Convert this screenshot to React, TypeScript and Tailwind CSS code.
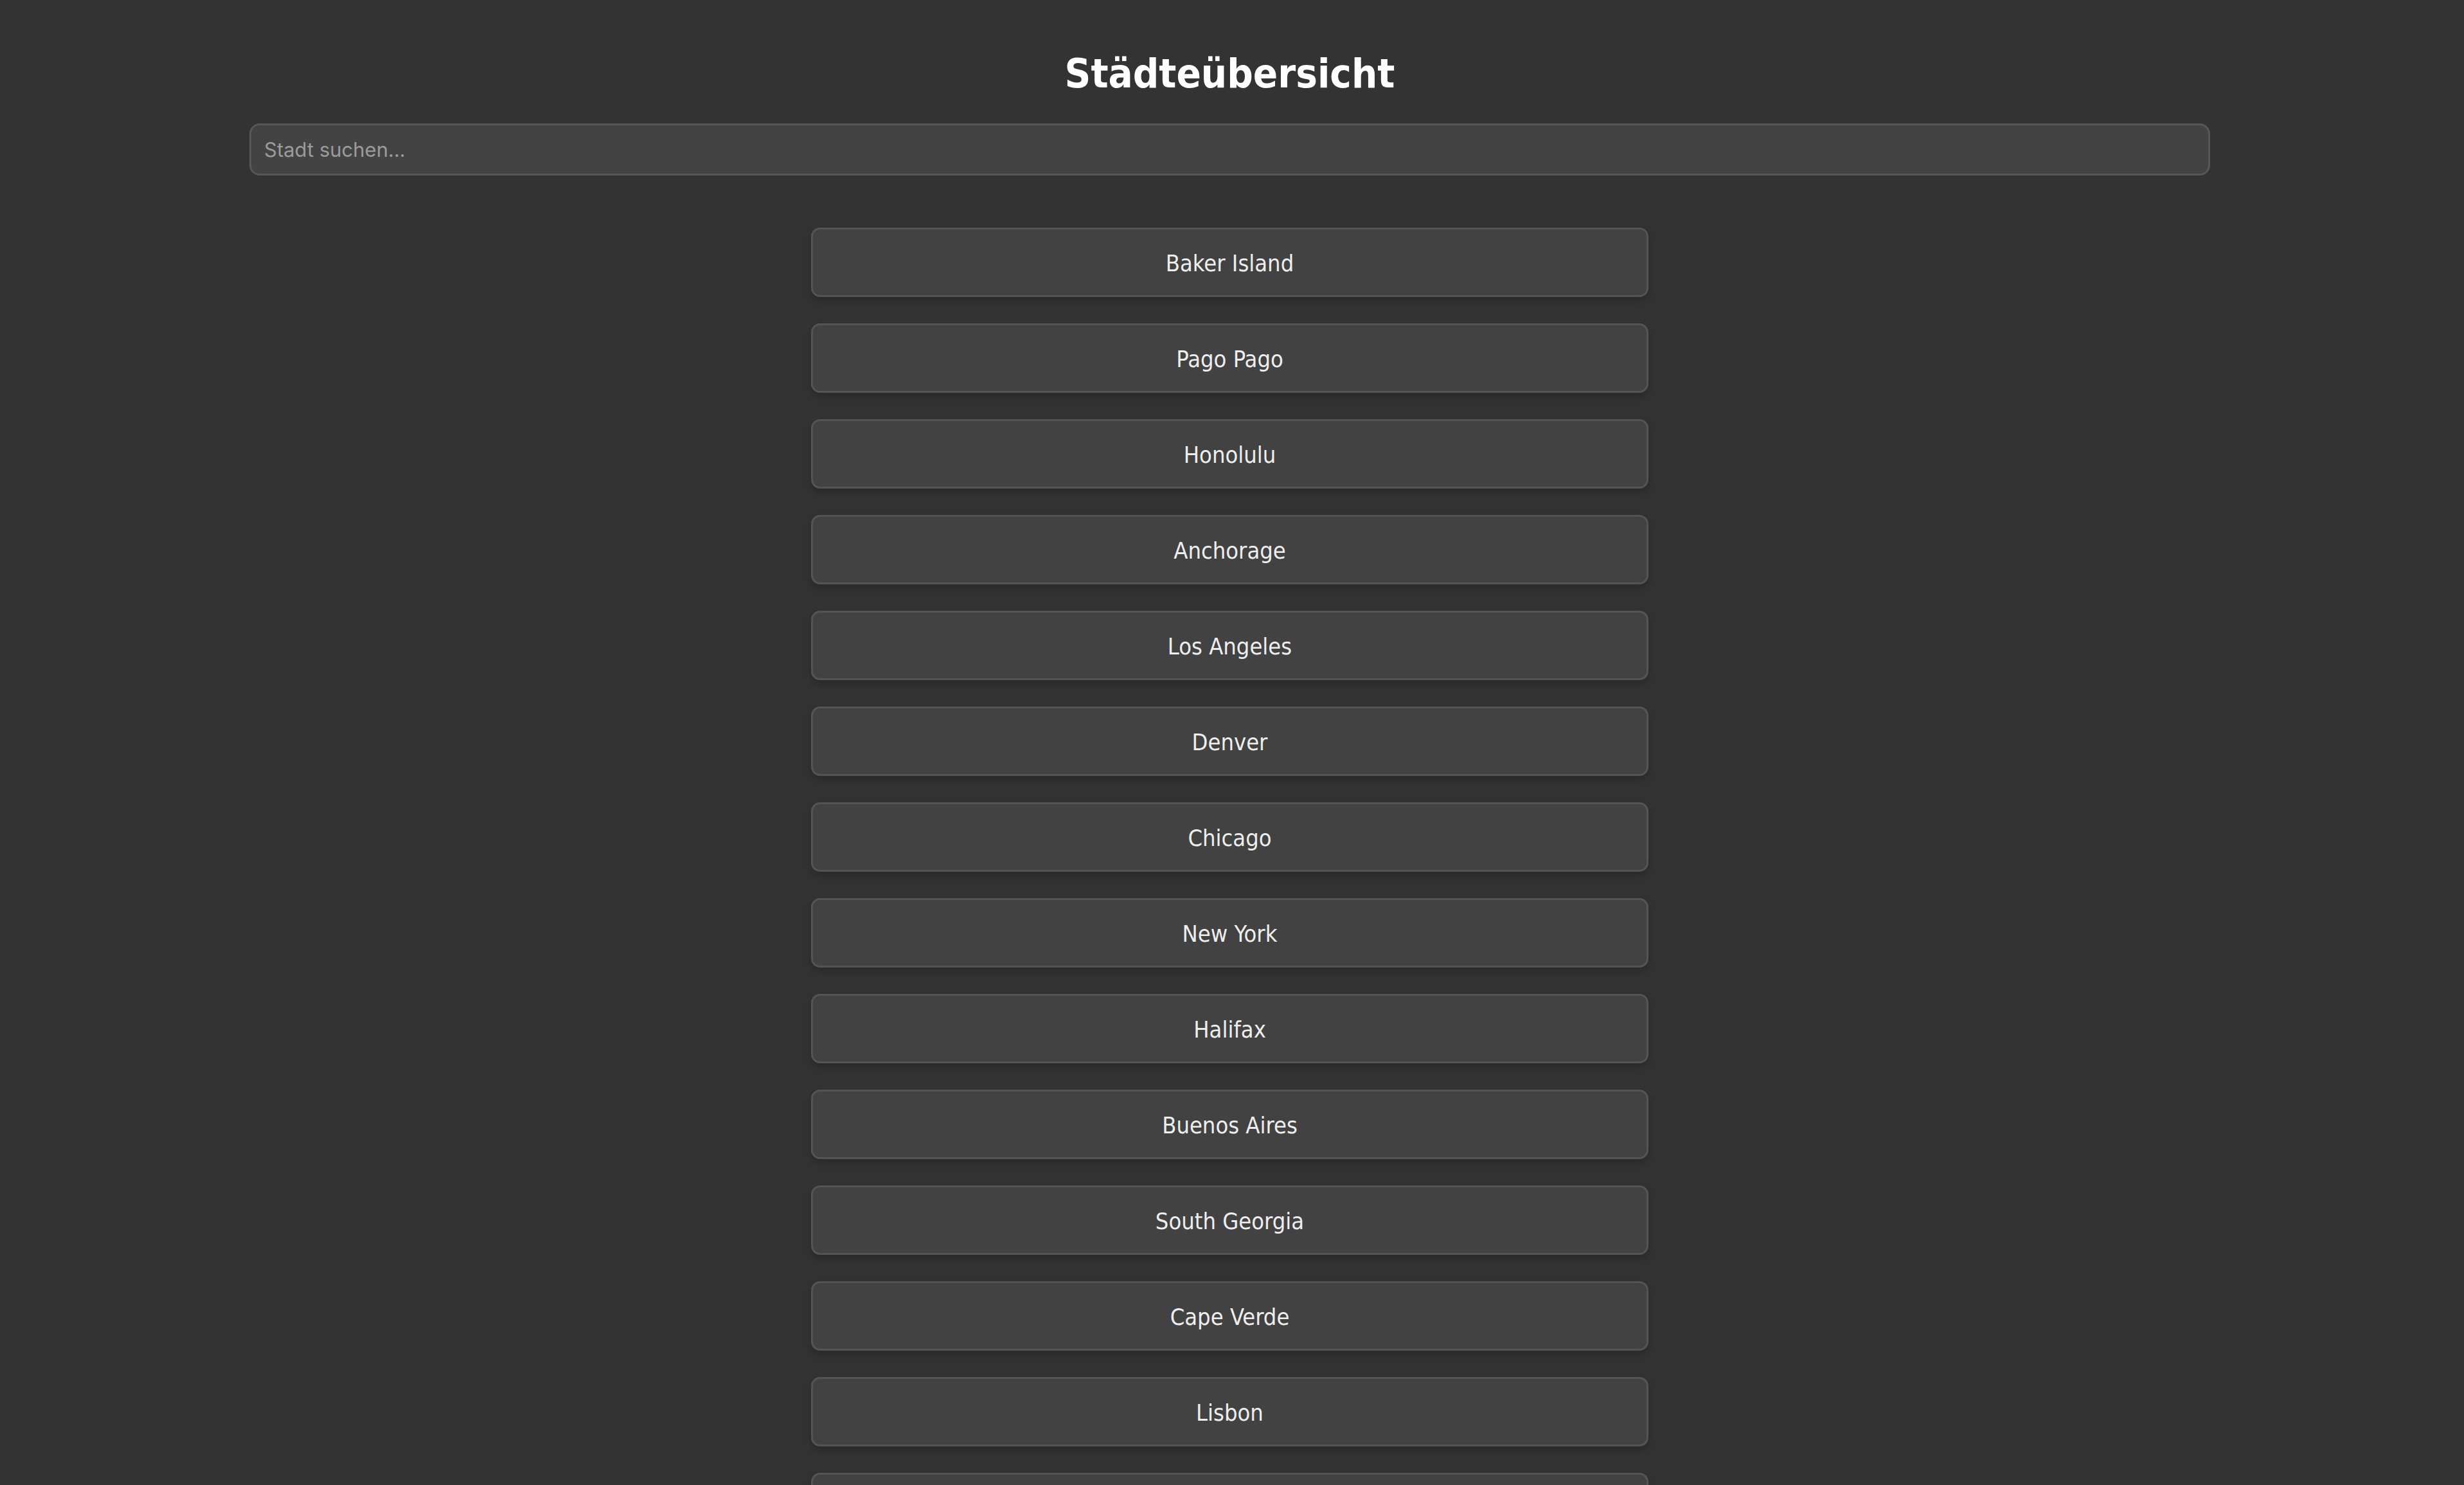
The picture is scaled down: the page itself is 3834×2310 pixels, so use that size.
const cities = [
  "Baker Island",
  "Pago Pago",
  "Honolulu",
  "Anchorage",
  "Los Angeles",
  "Denver",
  "Chicago",
  "New York",
  "Halifax",
  "Buenos Aires",
  "South Georgia",
  "Cape Verde",
  "Lisbon",
  "Berlin",
];

export default function App() {
  return (
    <div className="min-h-screen bg-[#333333] pl-[388px] pr-[395px] pt-[80px] pb-20 text-white">
      <h1 className="text-center font-['DejaVu_Sans_Condensed','DejaVu_Sans',sans-serif] text-[63px] font-bold leading-[70px] text-white">
        Städteübersicht
      </h1>

      <input
        type="text"
        placeholder="Stadt suchen..."
        className="mt-[42px] block h-[81px] w-full rounded-[16px] border-[3px] border-[#575757] bg-[#434343] px-[20px] font-['Inter',sans-serif] text-[31px] text-white outline-none placeholder:text-[#9b9b9b]"
      />

      <div className="mx-auto mt-[81px] flex w-[1303px] flex-col gap-[41px]">
        {cities.map((city) => (
          <div
            key={city}
            className="flex h-[108px] items-center justify-center rounded-[14px] border-[3px] border-[#545454] bg-[#424242] pt-[4px] font-['DejaVu_Sans_Condensed','DejaVu_Sans',sans-serif] text-[36px] text-[#eeeeee] shadow-[0_6px_14px_rgba(0,0,0,0.22)]"
          >
            {city}
          </div>
        ))}
      </div>
    </div>
  );
}
